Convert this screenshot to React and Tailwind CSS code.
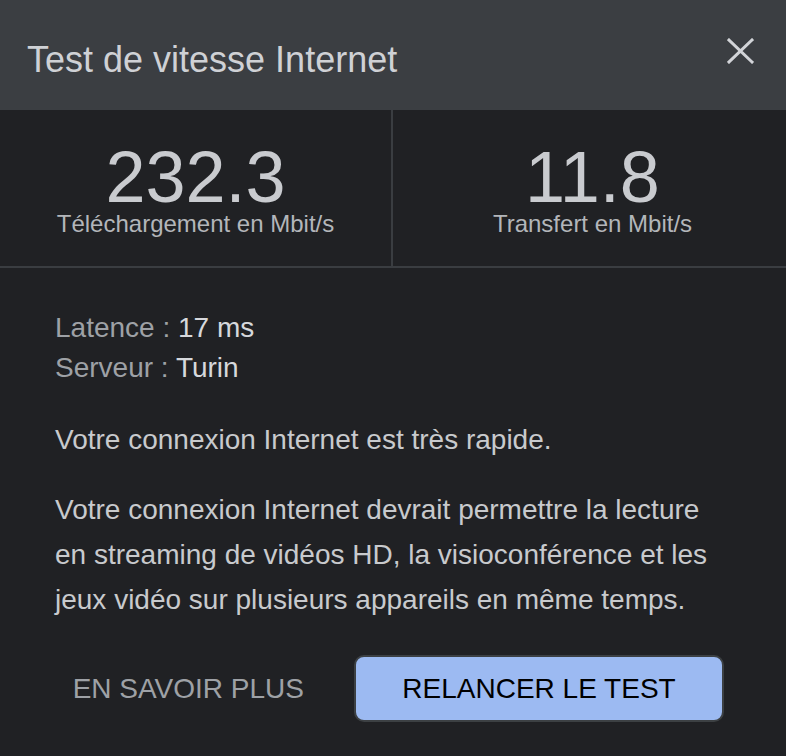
export default function App() {
  return (
    <div className="w-[786px] h-[756px] bg-[#202124] font-['Liberation_Sans',Arial,sans-serif] overflow-hidden">
      {/* header */}
      <div className="h-[110px] bg-[#3b3e42] flex items-start justify-between pl-[27px] pr-[32px]">
        <h1 className="mt-[40px] text-[36px] leading-[40px] text-[#cfd1d5]">Test de vitesse Internet</h1>
        <button className="mt-[38px] w-[27px] h-[26px] text-[#d2d4d8]">
          <svg viewBox="0 0 27 26" className="w-[27px] h-[26px]" fill="none" stroke="currentColor" strokeWidth="3" strokeLinecap="square">
            <path d="M2 2 L25 24 M25 2 L2 24" />
          </svg>
        </button>
      </div>

      {/* results */}
      <div className="grid grid-cols-2 border-b-2 border-[#3a3d41] h-[158px]">
        <div className="flex flex-col items-center pt-[34px] border-r-2 border-[#3a3d41]">
          <div className="text-[72px] leading-[66px] text-[#c9cbcf]">232.3</div>
          <div className="mt-[2px] text-[24px] leading-[24px] text-[#b3b6ba]">Téléchargement en Mbit/s</div>
        </div>
        <div className="flex flex-col items-center pt-[34px] pl-[6px]">
          <div className="text-[72px] leading-[66px] text-[#c9cbcf]">11.8</div>
          <div className="mt-[2px] text-[24px] leading-[24px] text-[#b3b6ba]">Transfert en Mbit/s</div>
        </div>
      </div>

      {/* details */}
      <div className="pl-[55px] pr-[56px] pt-[40px] text-[28px]">
        <div className="leading-[40px]">
          <span className="text-[#9ea1a6]">Latence : </span>
          <span className="text-[#d6d8dc]">17 ms</span>
        </div>
        <div className="leading-[40px]">
          <span className="text-[#9ea1a6]">Serveur : </span>
          <span className="text-[#d6d8dc]">Turin</span>
        </div>
        <p className="mt-[29px] leading-[45px] text-[#c8cacd]">Votre connexion Internet est très rapide.</p>
        <p className="mt-[25px] leading-[45px] text-[#c8cacd]">
          Votre connexion Internet devrait permettre la lecture en streaming de vidéos HD, la visioconférence et les jeux vidéo sur plusieurs appareils en même temps.
        </p>
      </div>

      {/* actions */}
      <div className="mt-[33px] flex items-center justify-end gap-[32px] pr-[62px]">
        <button className="px-[18px] text-[28px] leading-[32px] text-[#9ea1a6]">EN SAVOIR PLUS</button>
        <button className="w-[370px] h-[67px] rounded-[10px] border-2 border-[#3c4043] bg-[#9cbaf2] text-[28px] leading-[32px] text-black">
          RELANCER LE TEST
        </button>
      </div>
    </div>
  );
}
